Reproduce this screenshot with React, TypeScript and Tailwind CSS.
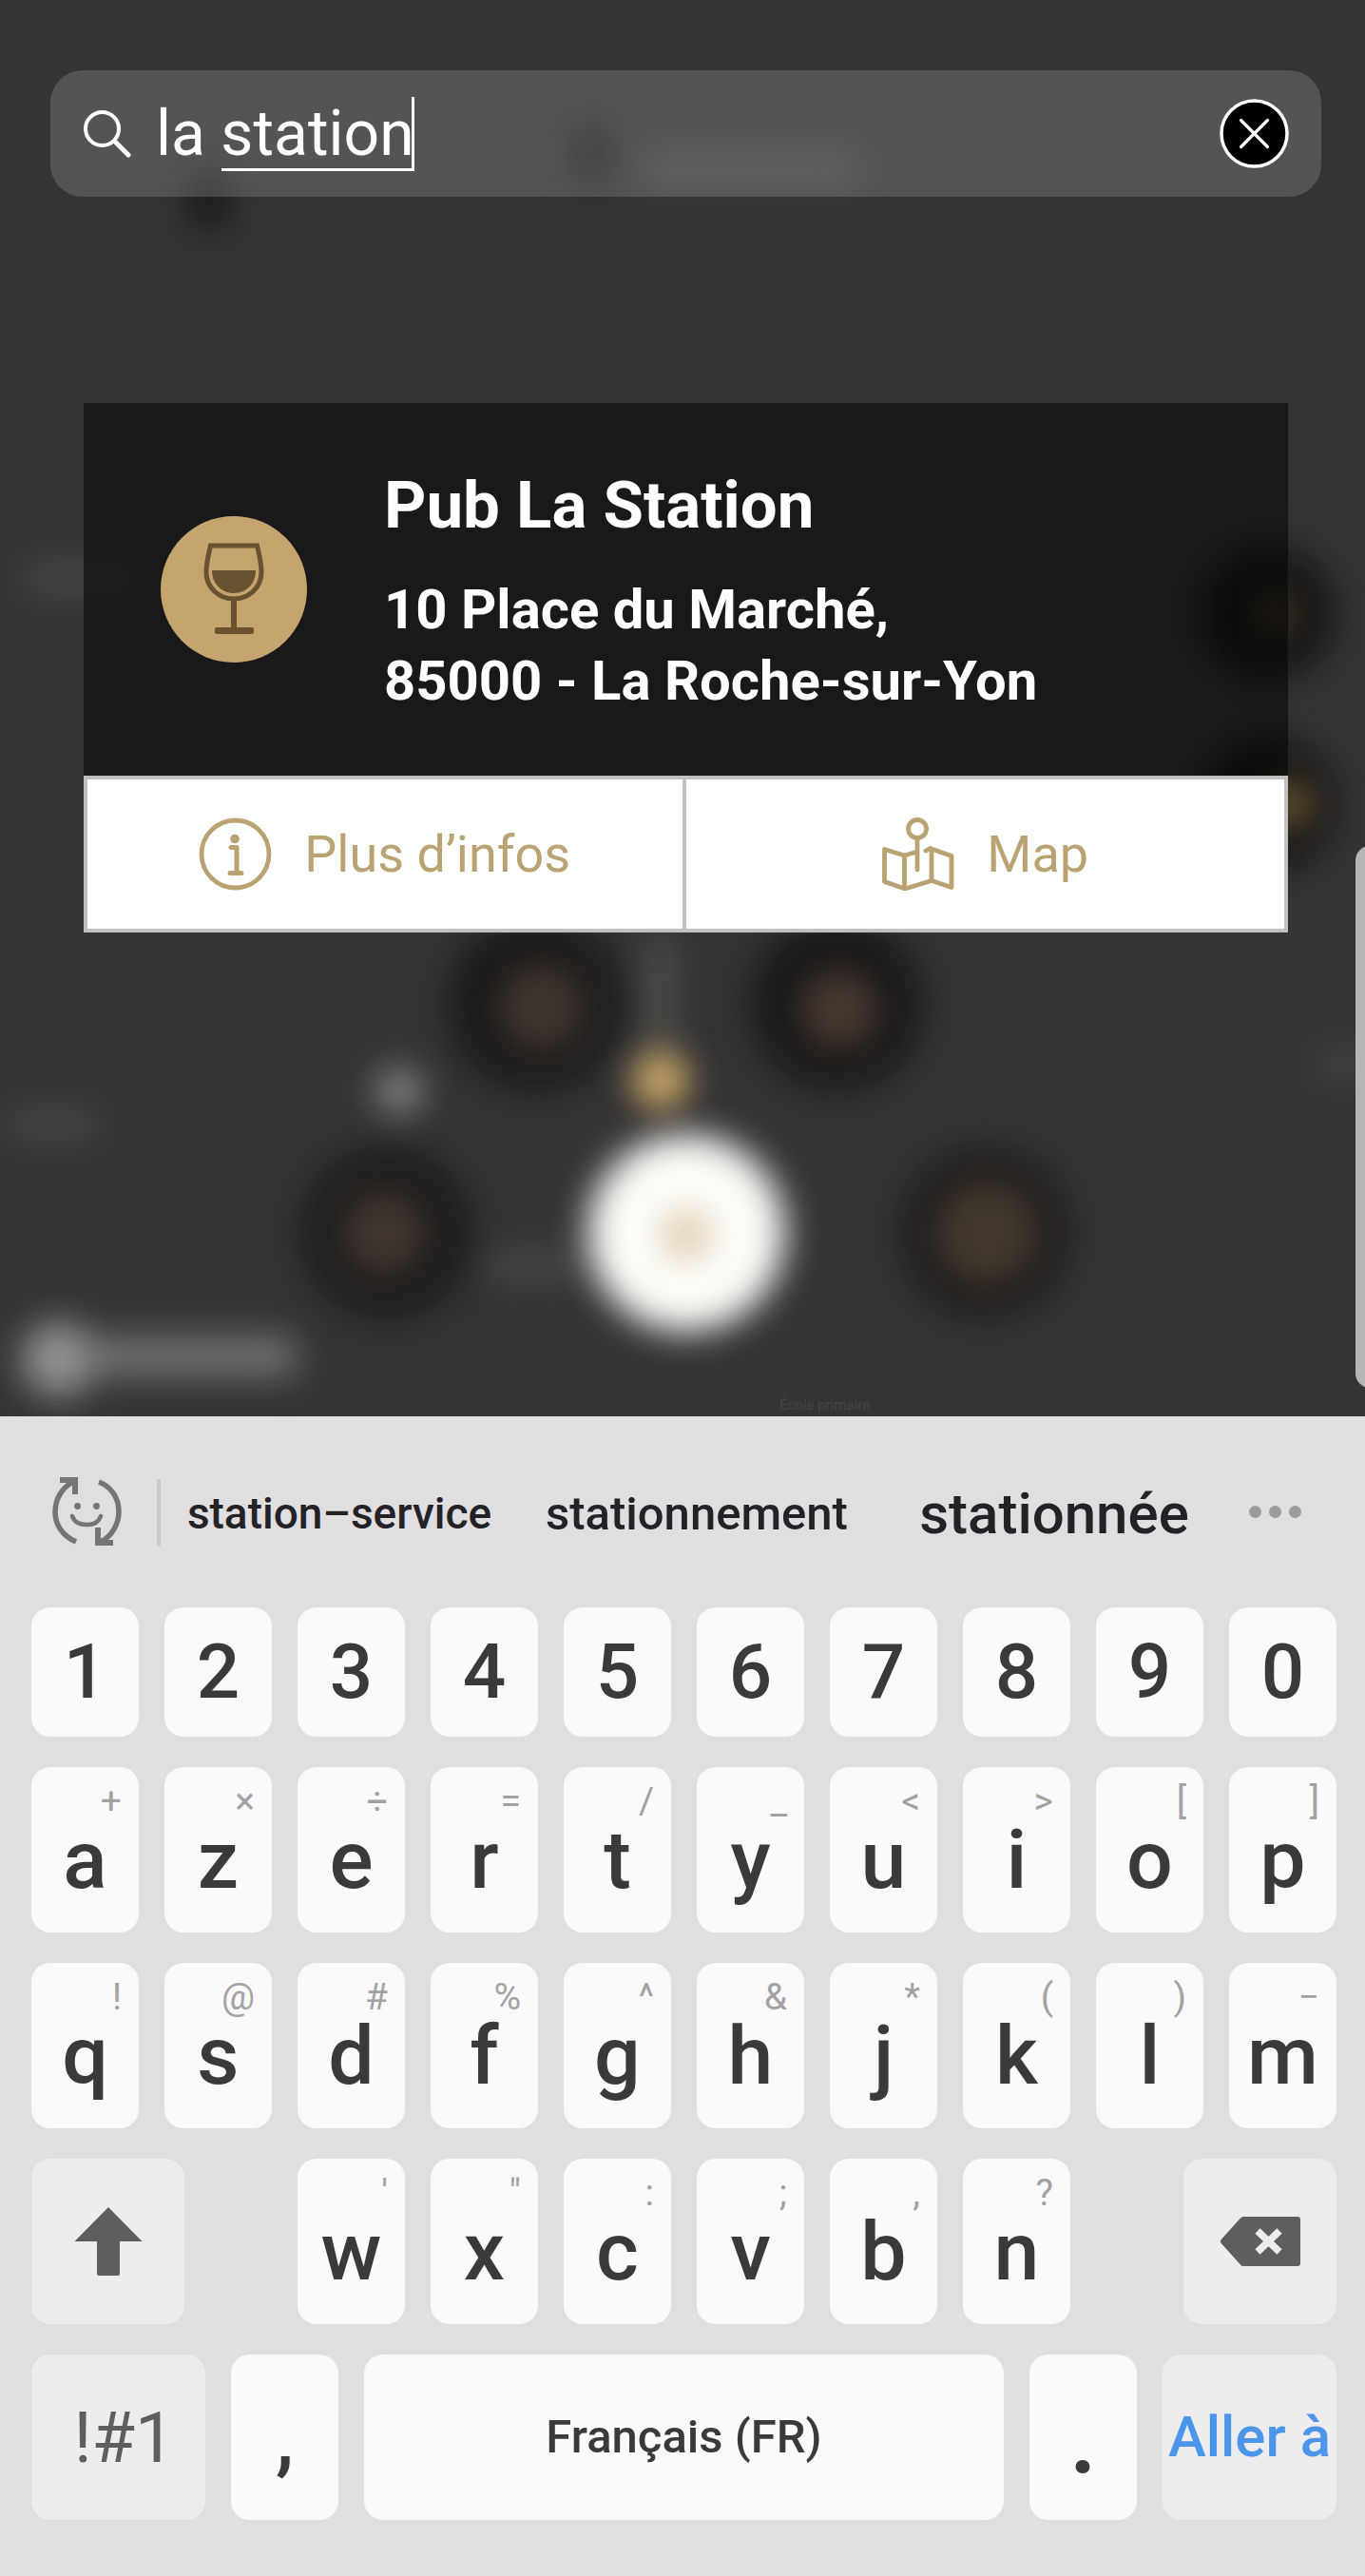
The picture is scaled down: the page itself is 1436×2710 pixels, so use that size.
import { useState } from 'react';
import type { ReactNode } from 'react';

interface KeyDef {
  label: string;
  hint?: string;
}

const digits = ['1', '2', '3', '4', '5', '6', '7', '8', '9', '0'];

const topRow: KeyDef[] = [
  { label: 'a', hint: '+' },
  { label: 'z', hint: '×' },
  { label: 'e', hint: '÷' },
  { label: 'r', hint: '=' },
  { label: 't', hint: '/' },
  { label: 'y', hint: '_' },
  { label: 'u', hint: '<' },
  { label: 'i', hint: '>' },
  { label: 'o', hint: '[' },
  { label: 'p', hint: ']' },
];

const homeRow: KeyDef[] = [
  { label: 'q', hint: '!' },
  { label: 's', hint: '@' },
  { label: 'd', hint: '#' },
  { label: 'f', hint: '%' },
  { label: 'g', hint: '^' },
  { label: 'h', hint: '&' },
  { label: 'j', hint: '*' },
  { label: 'k', hint: '(' },
  { label: 'l', hint: ')' },
  { label: 'm', hint: '−' },
];

const bottomRow: KeyDef[] = [
  { label: 'w', hint: "'" },
  { label: 'x', hint: '"' },
  { label: 'c', hint: ':' },
  { label: 'v', hint: ';' },
  { label: 'b', hint: ',' },
  { label: 'n', hint: '?' },
];

function MapBackdrop() {
  return (
    <svg
      aria-hidden="true"
      className="absolute inset-0 h-full w-full"
      viewBox="0 0 1436 1490"
      preserveAspectRatio="xMidYMin slice"
    >
      <defs>
        <filter id="soft" x="-150%" y="-150%" width="400%" height="400%" colorInterpolationFilters="sRGB">
          <feGaussianBlur stdDeviation="18" />
        </filter>
        <filter id="softer" x="-100%" y="-100%" width="300%" height="300%" colorInterpolationFilters="sRGB">
          <feGaussianBlur stdDeviation="20" />
        </filter>
      </defs>
      <rect width="1436" height="1490" fill="#353334" />

      {/* Streets and place names */}
      <g filter="url(#soft)">
        <rect x="680" y="164" width="220" height="26" fill="#4b494a" />
        <ellipse cx="622" cy="162" rx="16" ry="30" fill="#181617" />
        <ellipse cx="220" cy="212" rx="20" ry="26" fill="#131112" />
        <rect x="30" y="596" width="110" height="24" fill="#504e4f" />
        <rect x="10" y="1170" width="90" height="26" fill="#4c4a4b" />
        <rect x="510" y="1318" width="100" height="26" fill="#4a4b4c" />
        <rect x="1385" y="1106" width="60" height="26" fill="#464546" />
        <rect x="680" y="990" width="26" height="160" fill="#565651" />
      </g>

      {/* Category pins */}
      <g filter="url(#softer)">
        <circle cx="563" cy="1056" r="90" fill="#1a1919" />
        <circle cx="880" cy="1056" r="90" fill="#1a1919" />
        <circle cx="407" cy="1297" r="88" fill="#1c1b1b" />
        <circle cx="1036" cy="1297" r="86" fill="#1e1c1c" />
        <circle cx="1334" cy="645" r="68" fill="#151414" />
        <circle cx="1334" cy="846" r="68" fill="#151414" />
      </g>
      <g filter="url(#soft)">
        <circle cx="570" cy="1060" r="48" fill="#3e352e" />
        <circle cx="883" cy="1062" r="42" fill="#463930" />
        <circle cx="404" cy="1297" r="46" fill="#40362f" />
        <circle cx="1038" cy="1297" r="56" fill="#42382d" />
        <circle cx="1342" cy="645" r="26" fill="#3c3422" />
        <circle cx="1356" cy="846" r="26" fill="#665532" />
        <circle cx="420" cy="1148" r="25" fill="#858384" />
        <circle cx="695" cy="1137" r="30" fill="#cda968" />
        <circle cx="62" cy="1430" r="40" fill="#929091" />
        <rect x="90" y="1406" width="222" height="42" rx="10" fill="#737172" />
      </g>
      <circle cx="722" cy="1297" r="104" fill="#fdfcf9" filter="url(#soft)" />
      <circle cx="722" cy="1299" r="24" fill="#d9c6a2" filter="url(#soft)" />

      <text x="820" y="1483" fontSize="15" fill="#474546" fontFamily="Roboto, sans-serif">
        École primaire
      </text>
    </svg>
  );
}

function SearchIcon() {
  return (
    <svg aria-hidden="true" className="size-[50px] shrink-0" viewBox="0 0 50 50" fill="none" stroke="#fff" strokeLinecap="round">
      <circle cx="19.5" cy="19.5" r="17.5" strokeWidth="4" />
      <path d="M33 33l14 14" strokeWidth="5" />
    </svg>
  );
}

function ClearIcon() {
  return (
    <svg aria-hidden="true" className="size-[73px]" viewBox="0 0 73 73" fill="none" stroke="#fff">
      <circle cx="36.5" cy="36.5" r="34.5" fill="#000" strokeWidth="3.5" />
      <path d="M22.5 22.5l28 28M50.5 22.5l-28 28" strokeWidth="3.2" strokeLinecap="round" />
    </svg>
  );
}

function WineBadge() {
  return (
    <svg aria-hidden="true" className="size-[154px] shrink-0" viewBox="0 0 154 154" fill="none">
      <circle cx="77" cy="77" r="77" fill="#c5a46d" />
      <path
        d="M52.500 31h49c2 9 4.500 18 4.500 28 0 16-13 28-29 28S48 75 48 59c0-10 2.500-19 4.500-28z"
        stroke="#695230"
        strokeWidth="5"
      />
      <path d="M54 57h46c0 14-10 24-23 24S54 71 54 57z" fill="#695230" />
      <path d="M77 87v32" stroke="#695230" strokeWidth="6" />
      <rect x="57" y="117" width="41" height="7" rx="2" fill="#695230" />
    </svg>
  );
}

function InfoIcon() {
  return (
    <svg aria-hidden="true" className="size-[77px]" viewBox="0 0 77 77" fill="none" stroke="#baa373">
      <circle cx="38.500" cy="38.500" r="35.500" strokeWidth="4.800" />
      <circle cx="38" cy="22.500" r="4.800" fill="#baa373" stroke="none" />
      <path d="M34 31.500h6v27M33 58.500h12" strokeWidth="5" strokeLinecap="round" strokeLinejoin="round" />
    </svg>
  );
}

function MapIcon() {
  return (
    <svg aria-hidden="true" className="size-[77px]" viewBox="0 0 77 77" fill="none" stroke="#baa373" strokeWidth="4.800" strokeLinejoin="round">
      <circle cx="38" cy="12" r="9.500" />
      <path d="M38 22v33M47 35l4.500-2.500 22.500 8V73.500l-21-7-28 8.500-21.500-7.500V33.500L24.500 40 38 36" strokeLinecap="round" />
      <path d="M24.500 40v34M53 33v34" />
    </svg>
  );
}

function EmojiCycleIcon() {
  return (
    <svg aria-hidden="true" className="size-[73px]" viewBox="0 0 73 73" fill="none" stroke="#767477">
      <path d="M25 68C11 62 3 50 3 37 3 23 10 11 22 5M49 5c13 5 21 17 21 31 0 13-7 26-19 32" strokeWidth="5.500" />
      <path d="M8 3h16v15M64 69H48V53" strokeWidth="6" />
      <path d="M21 41c2 6 8 9 15.500 9S49 47 51 41" strokeWidth="4.500" strokeLinecap="round" />
      <circle cx="26.500" cy="30.500" r="3.400" fill="#767477" stroke="none" />
      <circle cx="46.500" cy="30.500" r="3.400" fill="#767477" stroke="none" />
    </svg>
  );
}

function ShiftIcon() {
  return (
    <svg aria-hidden="true" className="size-[72px]" viewBox="0 0 72 72" fill="#5f5d60">
      <path d="M36 0l35.500 36H48v34q0 2-2 2H26q-2 0-2-2V36H.5z" />
    </svg>
  );
}

function BackspaceIcon() {
  return (
    <svg aria-hidden="true" className="h-[52px] w-[84px]" viewBox="0 0 84 52">
      <path d="M24 0h57q3 0 3 3v46q0 3-3 3H24q-2 0-3-1.500L.7 28q-1.400-2 0-4L21 1.500Q22 0 24 0z" fill="#5f5d60" />
      <path d="M39 15l23 22M62 15L39 37" stroke="#eeecef" strokeWidth="7.500" />
    </svg>
  );
}

function LetterKey({ label, hint }: KeyDef) {
  return (
    <button
      type="button"
      aria-label={label}
      className="flex h-[174px] flex-col items-center rounded-[20px] bg-[#fbf9fc] pt-4 text-[#3b393c]"
    >
      <span className="self-end pr-[18px] text-[39px] leading-[40px] text-[#a3a1a4]">{hint}</span>
      <span className="text-[86px] leading-[84px] font-medium">{label}</span>
    </button>
  );
}

function FunctionKey({ label, className, children }: { label: string; className: string; children: ReactNode }) {
  return (
    <button
      type="button"
      aria-label={label}
      className={`flex h-[174px] items-center justify-center rounded-[20px] whitespace-nowrap ${className}`}
    >
      {children}
    </button>
  );
}

function Keyboard() {
  return (
    <section aria-label="Clavier" className="bg-[#e0dee1] pr-[30px] pb-[59px] pl-[33px]">
      {/* Suggestions */}
      <div className="flex h-[201px] items-center pr-[37px] pl-[22px] text-[#242226]">
        <button type="button" aria-label="Émojis">
          <EmojiCycleIcon />
        </button>
        <div className="ml-[37px] h-[70px] w-1 bg-[#c9c7ca]" />
        <div className="grid flex-1 grid-cols-3 items-center justify-items-center pt-1 text-[46px] font-medium">
          <button type="button">station–service</button>
          <button type="button" className="text-[49px]">stationnement</button>
          <button type="button" className="text-[60px] leading-[69px]">stationnée</button>
        </div>
        <button type="button" aria-label="Plus de suggestions" className="ml-[17px] flex gap-2">
          <span className="size-[13px] rounded-full bg-[#9b999c]" />
          <span className="size-[13px] rounded-full bg-[#9b999c]" />
          <span className="size-[13px] rounded-full bg-[#9b999c]" />
        </button>
      </div>

      <div className="flex flex-col gap-8">
        <div className="grid grid-cols-10 gap-[27px]">
          {digits.map((digit) => (
            <button
              key={digit}
              type="button"
              className="h-[136px] rounded-[20px] bg-[#fbf9fc] text-[80px] leading-[136px] font-medium text-[#3b393c]"
            >
              {digit}
            </button>
          ))}
        </div>
        <div className="grid grid-cols-10 gap-[27px]">
          {topRow.map((key) => (
            <LetterKey key={key.label} {...key} />
          ))}
        </div>
        <div className="grid grid-cols-10 gap-[27px]">
          {homeRow.map((key) => (
            <LetterKey key={key.label} {...key} />
          ))}
        </div>
        <div className="grid grid-cols-[161fr_65fr_repeat(6,113fr)_65fr_161fr] gap-[27px]">
          <FunctionKey label="Majuscule" className="bg-[#eeecef]">
            <ShiftIcon />
          </FunctionKey>
          <div />
          {bottomRow.map((key) => (
            <LetterKey key={key.label} {...key} />
          ))}
          <div />
          <FunctionKey label="Effacer" className="bg-[#eeecef]">
            <BackspaceIcon />
          </FunctionKey>
        </div>
        <div className="grid grid-cols-[183fr_113fr_673fr_113fr_183fr] gap-[27px]">
          <FunctionKey label="Symboles" className="bg-[#eeecef] pl-3 text-[74px] text-[#5f5d60]">
            !#1
          </FunctionKey>
          <FunctionKey label="Virgule" className="bg-[#fbf9fc] text-[86px] font-medium text-[#3b393c]">
            ,
          </FunctionKey>
          <FunctionKey label="Espace" className="bg-[#fbf9fc] text-[49px] font-medium text-[#3b393c]">
            Français (FR)
          </FunctionKey>
          <FunctionKey label="Point" className="bg-[#fbf9fc] text-[108px] font-medium text-[#3b393c]">
            .
          </FunctionKey>
          <FunctionKey label="Aller à" className="bg-[#eeecef] text-[60px] font-medium text-[#4b95ea]">
            Aller à
          </FunctionKey>
        </div>
      </div>
    </section>
  );
}

export default function App() {
  const [query, setQuery] = useState('la station');

  return (
    <div className="flex min-h-screen flex-col overflow-hidden bg-[#353334] font-['Roboto',sans-serif]">
      <main className="relative flex-1 overflow-hidden pt-[74px] pb-[509px]">
        <MapBackdrop />

        <form
          role="search"
          onSubmit={(event) => event.preventDefault()}
          className="relative mr-[46px] ml-[53px] flex h-[133px] items-center rounded-[34px] bg-white/16 pr-[34px] pl-[35px]"
        >
          <SearchIcon />
          <div className="relative ml-[26px] flex-1">
            <input
              type="text"
              aria-label="Rechercher"
              value={query}
              onChange={(event) => setQuery(event.target.value)}
              className="block h-[78px] w-full bg-transparent text-[66px] text-white outline-none"
            />
            {/* Composing underline and caret */}
            {query === 'la station' && (
              <span className="pointer-events-none absolute top-0 left-[69px] h-[78px] w-[203px] border-r-3 border-b-3 border-white" />
            )}
          </div>
          <button type="button" aria-label="Effacer la recherche" onClick={() => setQuery('')}>
            <ClearIcon />
          </button>
        </form>

        <article className="relative mt-[217px] mr-[81px] ml-[88px]">
          <div className="flex items-center gap-[81px] bg-black/50 py-[62px] pl-[81px]">
            <WineBadge />
            <div className="font-bold text-white">
              <h1 className="text-[69px] leading-[92px]">Pub La Station</h1>
              <p className="mt-[26px] text-[58px] leading-[75px]">
                10 Place du Marché,
                <br />
                85000 - La Roche-sur-Yon
              </p>
            </div>
          </div>
          <div className="grid h-[165px] grid-cols-2 divide-x-4 divide-[#c1bfc0] border-4 border-[#c1bfc0] bg-white text-[54px] text-[#baa373]">
            <button type="button" className="flex items-center justify-center gap-[34px]">
              <InfoIcon />
              Plus d’infos
            </button>
            <button type="button" className="flex items-center justify-center gap-[34px]">
              <MapIcon />
              Map
            </button>
          </div>
        </article>

        {/* Edge panel handle */}
        <div className="absolute top-[890px] -right-5 h-[570px] w-[30px] rounded-[24px] bg-[#b7b5b6]" />
      </main>

      <Keyboard />
    </div>
  );
}
